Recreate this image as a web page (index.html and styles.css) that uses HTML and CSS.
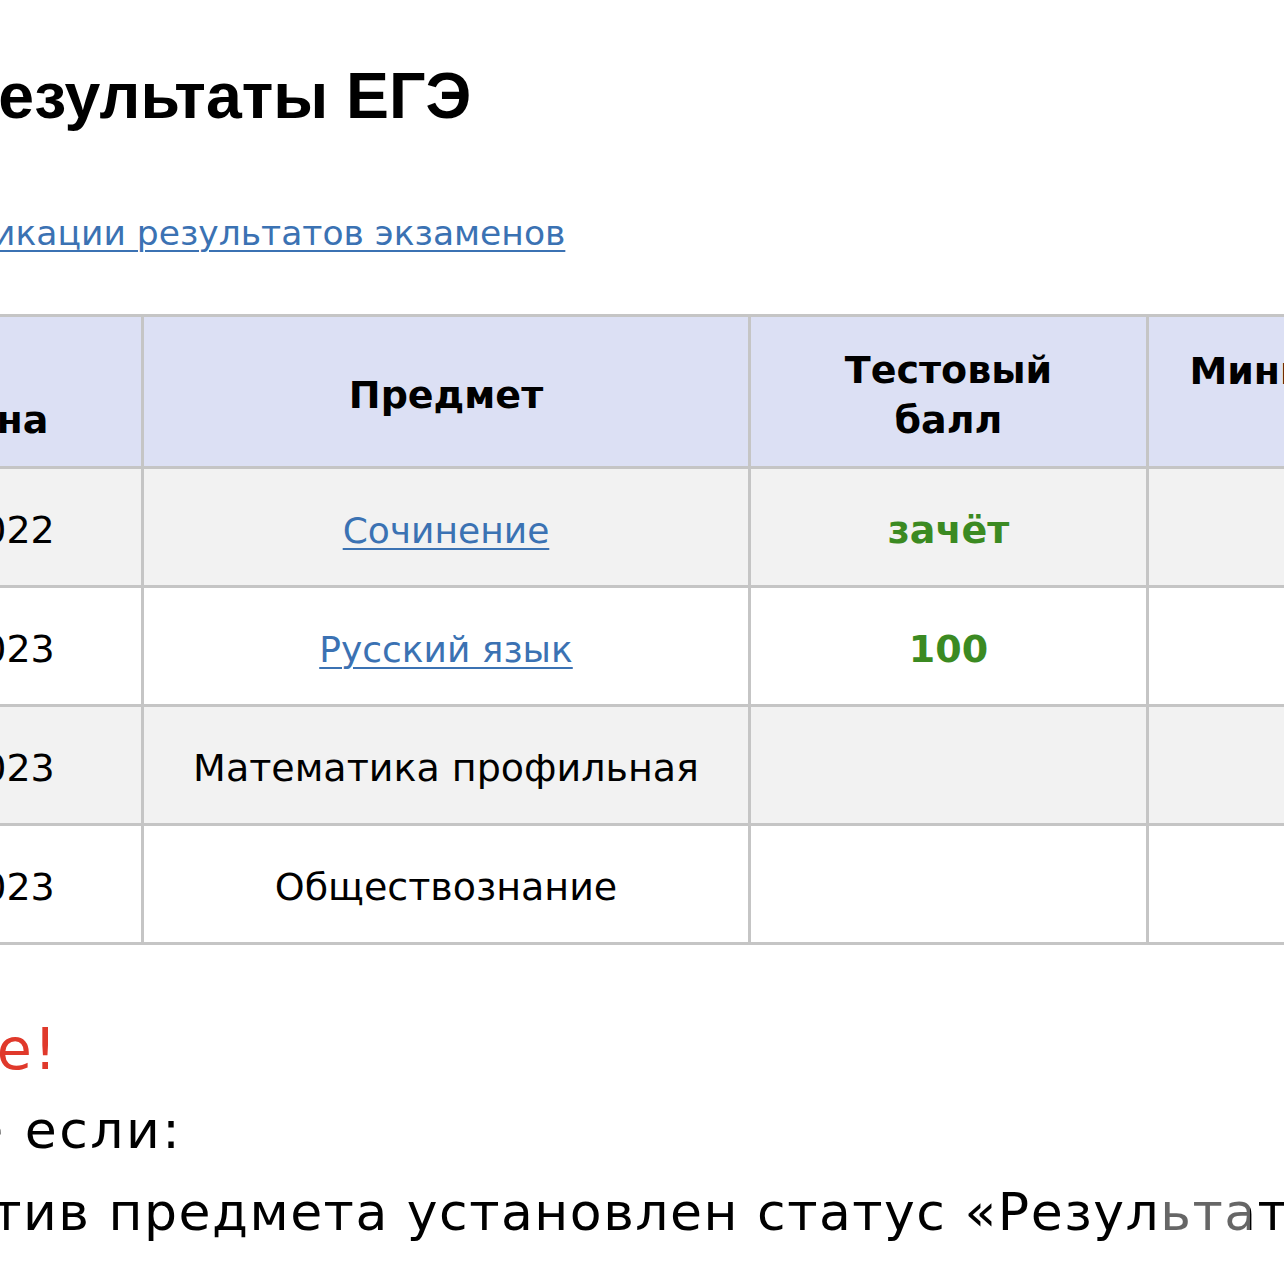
FILE: index.html
```
<!DOCTYPE html>
<html lang="ru">
<head>
<meta charset="utf-8">
<title>Результаты ЕГЭ</title>
<link rel="stylesheet" href="styles.css">
</head>
<body>
<main class="page">
  <h1 class="title">Результаты ЕГЭ</h1>
  <p class="schedule"><a href="#" class="link">График публикации результатов экзаменов</a></p>

  <table class="results">
    <colgroup>
      <col class="c-date">
      <col class="c-subject">
      <col class="c-score">
      <col class="c-min">
    </colgroup>
    <thead>
      <tr class="head">
        <th>Дата<br>экзамена</th>
        <th>Предмет</th>
        <th>Тестовый<br>балл</th>
        <th class="top">Минимальный<br>балл</th>
      </tr>
    </thead>
    <tbody>
      <tr class="odd">
        <td>07.12.2022</td>
        <td><a href="#" class="link cell-link">Сочинение</a></td>
        <td class="score">зачёт</td>
        <td></td>
      </tr>
      <tr>
        <td>26.05.2023</td>
        <td><a href="#" class="link cell-link">Русский язык</a></td>
        <td class="score">100</td>
        <td></td>
      </tr>
      <tr class="odd">
        <td>01.06.2023</td>
        <td>Математика профильная</td>
        <td></td>
        <td></td>
      </tr>
      <tr>
        <td>05.06.2023</td>
        <td>Обществознание</td>
        <td></td>
        <td></td>
      </tr>
    </tbody>
  </table>

  <section class="notice">
    <p class="warn"><span class="shift-warn">Внимание!</span></p>
    <p class="line"><span class="shift-2">Результат может не отображаться, в том числе если:</span></p>
    <p class="line"><span class="shift-3">напротив предмета установлен статус «Результат не обработан»</span></p>
  </section>
  <div class="fade"></div>
</main>
</body>
</html>
```
FILE: styles.css
```
html, body {
  margin: 0;
  padding: 0;
  overflow: hidden;
  background: #ffffff;
}

.page {
  position: relative;
  width: 1284px;
  height: 1262px;
  font-family: "DejaVu Sans", Verdana, sans-serif;
  color: #000;
}

.title {
  font-family: "Liberation Sans", Arial, sans-serif;
  font-weight: bold;
  font-size: 64.4px;
  line-height: 72px;
  margin: 0;
  padding-top: 60px;
  margin-left: -43px;
  white-space: nowrap;
}

.schedule {
  margin: 0;
  margin-top: 78px;
  margin-left: -241px;
  font-size: 34.5px;
  line-height: 46px;
  white-space: nowrap;
}

.link {
  color: #3b72b3;
  text-decoration: underline;
  text-decoration-thickness: 2px;
  text-underline-offset: 5px;
}

.cell-link {
  font-size: 36px;
}

.results {
  margin-top: 58px;
  margin-left: -252px;
  border-collapse: collapse;
  table-layout: fixed;
  width: 1795px;
  font-size: 38px;
}

.c-date { width: 393px; }
.c-subject { width: 607px; }
.c-score { width: 398px; }
.c-min { width: 397px; }

.results th,
.results td {
  border: 3px solid #c5c5c5;
  text-align: center;
  vertical-align: middle;
  padding: 6px 10px 0;
  white-space: nowrap;
}

.results th {
  font-weight: bold;
  line-height: 50px;
  height: 143px;
  background: #dce0f4;
}

.results th.top {
  vertical-align: top;
  padding-top: 29px;
  height: 120px;
}

.results td {
  height: 110px;
  line-height: 46px;
  background: #ffffff;
}

.results tr.odd td {
  background: #f2f2f2;
}

.score {
  color: #3b8a22;
  font-weight: bold;
}

.notice {
  margin-top: 64px;
}

.notice p {
  margin: 0;
  white-space: nowrap;
}

.warn {
  color: #e0392b;
  font-size: 57px;
  line-height: 80px;
  letter-spacing: 2px;
}

.shift-warn { margin-left: -283px; }

.line {
  font-size: 52px;
  line-height: 82px;
  letter-spacing: 1.5px;
}

.shift-2 { margin-left: -1425px; letter-spacing: 2.5px; }
.shift-3 { margin-left: -181px; }

.fade {
  position: absolute;
  left: 1160px;
  top: 1186px;
  width: 90px;
  height: 52px;
  background: rgba(255, 255, 255, 0.4);
  border-radius: 8px;
}
```
